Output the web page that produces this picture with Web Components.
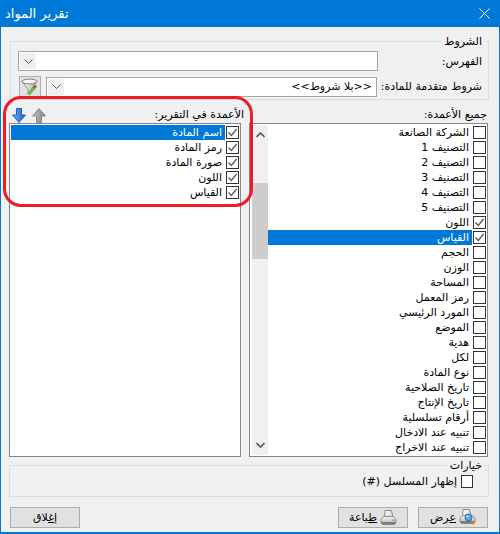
<!DOCTYPE html>
<html lang="ar">
<head>
<meta charset="utf-8">
<title>تقرير المواد</title>
<style>
  html, body { margin: 0; padding: 0; background: #f0f0f0; }
  body { font: 11px "DejaVu Sans", "Noto Sans", sans-serif; color: #000; }
</style>
</head>
<body>
<report-window caption="تقرير المواد"></report-window>

<script>
const CHECK = `<svg width="11" height="11" viewBox="0 0 11 11"><path d="M1.5 5.5 L4.3 8.5 L9.6 2" fill="none" stroke="#5a5a5a" stroke-width="1.3"/></svg>`;

const PRINTER_BODY = `
  <path d="M1 9.500 3.500 6.500h10L16 9.500v3.500l-1.500 1.500h-12L1 13z" fill="url(#body)" stroke="#858585" stroke-width=".9"/>
  <path d="M1.500 12h14v1.300l-1.200 1h-11.600l-1.200-1z" fill="#7d7d7d"/>`;
const PRINTER_DEFS = `
  <defs>
    <linearGradient id="body" x1="0" x2="0" y1="0" y2="1"><stop offset="0" stop-color="#f4f4f4"/><stop offset="1" stop-color="#b4b4b4"/></linearGradient>
    <linearGradient id="paper" x1="0" x2="1" y1="0" y2="1"><stop offset="0" stop-color="#fff"/><stop offset="1" stop-color="#bcd4e8"/></linearGradient>
  </defs>`;

const ICONS = {
  down: `<svg width="14" height="15" viewBox="0 0 14 15"><defs><linearGradient id="b" x1="0" x2="1"><stop offset="0" stop-color="#7db4ee"/><stop offset="1" stop-color="#1458b8"/></linearGradient></defs><path d="M4.5 .5h5v6.5h4L7 14.500.5 7h4z" fill="url(#b)" stroke="#1c5fb4"/></svg>`,
  up: `<svg width="14" height="15" viewBox="0 0 14 15"><defs><linearGradient id="g" x1="0" x2="1"><stop offset="0" stop-color="#c4c4c4"/><stop offset="1" stop-color="#808080"/></linearGradient></defs><path d="M4.5 14.500h5V8h4L7 .5.5 8h4z" fill="url(#g)" stroke="#8a8a8a"/></svg>`,
  funnel: `<svg width="18" height="18" viewBox="0 0 18 18">
    <defs><linearGradient id="f" x1="0" x2="1"><stop offset="0" stop-color="#fff"/><stop offset="1" stop-color="#a9a9a9"/></linearGradient></defs>
    <path d="M1 3.500 7 11.500V16l3-1.500v-3L16 3.500z" fill="url(#f)" stroke="#7a7a7a" stroke-width=".8"/>
    <ellipse cx="8.500" cy="3.500" rx="7.500" ry="2.400" fill="#f7f7f7" stroke="#6e6e6e" stroke-width=".9"/>
    <path d="M7.500 16.500 13.500 9.500" stroke="#5cc23f" stroke-width="3"/>
    <path d="M13 10 15 7.500" stroke="#e23a30" stroke-width="2.500"/>
  </svg>`,
  printer: `<svg width="17" height="16" viewBox="0 0 17 16">${PRINTER_DEFS}
    <path d="M5 .5h6.500l1.500 7H4.500z" fill="url(#paper)" stroke="#808080" stroke-width=".9"/>
    ${PRINTER_BODY}
    <rect x="12.500" y="9.500" width="2" height="1.200" fill="#3fb035"/>
  </svg>`,
  preview: `<svg width="17" height="17" viewBox="0 0 17 17">${PRINTER_DEFS}
    <path d="M4 .5h6.500l1.500 7H3.500z" fill="url(#paper)" stroke="#808080" stroke-width=".9"/>
    ${PRINTER_BODY}
    <circle cx="9.500" cy="8.500" r="3.500" fill="#5aa8e8" stroke="#2c6cb0"/>
    <circle cx="8.500" cy="7.500" r="1.100" fill="#cfe8fb"/>
    <path d="M12 11.500l3 3.500" stroke="#e2762a" stroke-width="2.200"/>
  </svg>`
};

// title bar + the three stacked sections of the dialog
class ReportWindow extends HTMLElement {
  constructor() {
    super();
    this.attachShadow({ mode: "open" });
  }

  connectedCallback() {
    const caption = this.getAttribute("caption") || "";
    this.shadowRoot.innerHTML = `
      <style>
        :host {
          display: flex;
          flex-direction: column;
          position: relative;
          box-sizing: border-box;
          width: 500px;
          height: 534px;
          border: 1px solid #0078d7;
          border-bottom-width: 2px;
          background: #f0f0f0;
          direction: rtl;
        }
        .titlebar {
          direction: ltr;
          display: flex;
          justify-content: space-between;
          align-items: center;
          height: 25px;
          padding: 0 9px 1px 4px;
          background: #0078d7;
          color: #fff;
          font-size: 13px;
        }
        .conditions { margin: 14px 10px 0 9px; }
        .columns {
          display: grid;
          grid-template-columns: 239px 232px;
          column-gap: 8px;
          margin: 0 11px 0 8px;
        }
        .options { margin: 8px 10px 0 8px; height: 32px; }
        .footer {
          display: flex;
          gap: 10px;
          margin: 10px 11px 0 9px;
        }
        .spacer { flex: 1; }
        .outline {
          position: absolute;
          left: 2px;
          top: 95px;
          width: 250px;
          height: 111px;
          box-sizing: border-box;
          border: 3px solid #ed1c24;
          border-radius: 18px;
          pointer-events: none;
        }
      </style>
      <div class="titlebar">
        <span dir="rtl">${caption}</span>
        <svg width="11" height="11" viewBox="0 0 11 11"><path d="M.5 .5l10 10M10.500 .5l-10 10" stroke="#fff" fill="none"/></svg>
      </div>
      <conditions-group class="conditions"></conditions-group>
      <div class="columns">
        <column-list heading="جميع الأعمدة:" scrolling selected="7" checked="6,7"
          items="الشركة الصانعة|التصنيف 1|التصنيف 2|التصنيف 3|التصنيف 4|التصنيف 5|اللون|القياس|الحجم|الوزن|المساحة|رمز المعمل|المورد الرئيسي|الموضع|هدية|لكل|نوع المادة|تاريخ الصلاحية|تاريخ الإنتاج|أرقام تسلسلية|تنبيه عند الادخال|تنبيه عند الاخراج"></column-list>
        <column-list heading="الأعمدة في التقرير:" arrows selected="0" checked="0,1,2,3,4"
          items="اسم المادة|رمز المادة|صورة المادة|اللون|القياس"></column-list>
      </div>
      <win-group class="options" label="خيارات">
        <options-row></options-row>
      </win-group>
      <div class="footer">
        <win-button icon="preview"><u>ع</u>رض</win-button>
        <win-button icon="printer"><u>ط</u>باعة</win-button>
        <span class="spacer"></span>
        <win-button>إ<u>غ</u>لاق</win-button>
      </div>
      <div class="outline"></div>
    `;
  }
}

class WinGroup extends HTMLElement {
  constructor() {
    super();
    this.attachShadow({ mode: "open" });
  }

  connectedCallback() {
    this.shadowRoot.innerHTML = `
      <style>
        :host {
          display: block;
          position: relative;
          box-sizing: border-box;
          border: 1px solid #dcdcdc;
        }
        .legend {
          position: absolute;
          top: -7px;
          right: 3px;
          padding: 0 3px;
          line-height: 14px;
          background: #f0f0f0;
        }
      </style>
      <div class="legend">${this.getAttribute("label") || ""}</div>
      <slot></slot>
    `;
  }
}

class WinCombo extends HTMLElement {
  constructor() {
    super();
    this.attachShadow({ mode: "open" });
  }

  connectedCallback() {
    this.shadowRoot.innerHTML = `
      <style>
        :host {
          display: flex;
          align-items: center;
          box-sizing: border-box;
          height: 20px;
          padding: 1px;
          border: 1px solid #a5a5a5;
          background: #fff;
        }
        .text { flex: 1; padding-right: 3px; }
        .drop {
          display: flex;
          align-items: center;
          justify-content: center;
          width: 16px;
          height: 100%;
          background: #f0f0f0;
        }
      </style>
      <span class="text"><slot></slot></span>
      <span class="drop">
        <svg width="9" height="5" viewBox="0 0 9 5"><path d="M.5 .5l4 4 4-4" fill="none" stroke="#555"/></svg>
      </span>
    `;
  }
}

class ConditionsGroup extends HTMLElement {
  constructor() {
    super();
    this.attachShadow({ mode: "open" });
  }

  connectedCallback() {
    this.shadowRoot.innerHTML = `
      <style>
        :host { display: block; }
        win-group {
          height: 59px;
          padding: 9px 6px 0 7px;
        }
        .grid {
          display: grid;
          grid-template-columns: 104px 1fr;
          row-gap: 5px;
          align-items: center;
        }
        .filter { display: flex; gap: 5px; align-items: center; margin-right: 1px; }
        .filter win-combo { flex: 1; }
        .filter button {
          display: flex;
          align-items: center;
          justify-content: center;
          width: 22px;
          height: 21px;
          margin: 0 0 0 1px;
          padding: 0;
          border: 1px solid #adadad;
          background: #e1e1e1;
        }
      </style>
      <win-group label="الشروط">
        <div class="grid">
          <label>الفهرس:</label>
          <win-combo></win-combo>
          <label>شروط متقدمة للمادة:</label>
          <div class="filter">
            <win-combo>&lt;&lt;بلا شروط&gt;&gt;</win-combo>
            <button>${ICONS.funnel}</button>
          </div>
        </div>
      </win-group>
    `;
  }
}

class ColumnList extends HTMLElement {
  constructor() {
    super();
    this.attachShadow({ mode: "open" });
  }

  connectedCallback() {
    const items = this.getAttribute("items").split("|");
    const checked = this.getAttribute("checked").split(",").map(Number);
    const selected = Number(this.getAttribute("selected"));
    const rows = items.map((text, i) => `
      <div class="row ${i === selected ? "selected" : ""}">
        <span class="box">${checked.includes(i) ? CHECK : ""}</span>
        <span class="text">${text}</span>
      </div>`).join("");
    const hasArrows = this.hasAttribute("arrows");
    const arrows = hasArrows ? `<span class="arrows">${ICONS.up}${ICONS.down}</span>` : "";
    const scrollbar = this.hasAttribute("scrolling")
      ? `<div class="scrollbar">
           <svg width="9" height="6" viewBox="0 0 9 6"><path d="M.5 5l4-4 4 4" fill="none" stroke="#555" stroke-width="1.600"/></svg>
           <div class="track"><div class="thumb"></div></div>
           <svg width="9" height="6" viewBox="0 0 9 6"><path d="M.5 1l4 4 4-4" fill="none" stroke="#555" stroke-width="1.600"/></svg>
         </div>` : "";

    this.shadowRoot.innerHTML = `
      <style>
        :host { display: block; }
        .head {
          display: flex;
          justify-content: space-between;
          align-items: center;
          height: 23px;
          box-sizing: border-box;
          padding: 5px 1px 0 0;
          margin-right: ${hasArrows ? "-4px" : "0"};
        }
        .arrows { display: flex; gap: 6px; margin-left: 3px; margin-top: 2px; }
        .list {
          display: flex;
          box-sizing: border-box;
          height: 334px;
          padding: 1px;
          border: 1px solid #828790;
          background: #fff;
        }
        .rows { flex: 1; }
        .row { display: flex; height: 15px; align-items: stretch; }
        .box {
          flex: none;
          display: flex;
          align-items: center;
          justify-content: center;
          box-sizing: border-box;
          width: 13px;
          height: 13px;
          margin: 1px 0 1px 1px;
          border: 1px solid #333;
          background: #fff;
        }
        .text {
          flex: 1;
          padding-right: 3px;
          line-height: 15px;
          white-space: nowrap;
        }
        .selected .text { background: #0078d7; color: #fff; }
        .scrollbar {
          flex: none;
          display: flex;
          flex-direction: column;
          align-items: center;
          justify-content: space-between;
          box-sizing: border-box;
          width: 16px;
          margin-left: 1px;
          padding: 7px 0;
          background: #f0f0f0;
        }
        .track { flex: 1; align-self: stretch; padding-top: 45px; }
        .thumb { height: 76px; background: #cdcdcd; }
      </style>
      <div class="head">
        <span>${this.getAttribute("heading")}</span>
        ${arrows}
      </div>
      <div class="list">
        <div class="rows">${rows}</div>
        ${scrollbar}
      </div>
    `;
  }
}

class OptionsRow extends HTMLElement {
  constructor() {
    super();
    this.attachShadow({ mode: "open" });
  }

  connectedCallback() {
    this.shadowRoot.innerHTML = `
      <style>
        :host {
          display: flex;
          align-items: center;
          gap: 4px;
          padding: 9px 15px 0 0;
        }
        .box {
          box-sizing: border-box;
          width: 12px;
          height: 13px;
          border: 1px solid #333;
          background: #fff;
        }
      </style>
      <span class="box"></span>
      <span>إظهار المسلسل (#)</span>
    `;
  }
}

class WinButton extends HTMLElement {
  constructor() {
    super();
    this.attachShadow({ mode: "open" });
  }

  connectedCallback() {
    const icon = ICONS[this.getAttribute("icon")] || "";
    this.shadowRoot.innerHTML = `
      <style>
        :host {
          display: flex;
          align-items: center;
          justify-content: center;
          gap: 3px;
          box-sizing: border-box;
          width: 70px;
          height: 21px;
          border: 1px solid #adadad;
          background: #e1e1e1;
        }
      </style>
      ${icon}
      <span><slot></slot></span>
    `;
  }
}

customElements.define("win-group", WinGroup);
customElements.define("win-combo", WinCombo);
customElements.define("win-button", WinButton);
customElements.define("conditions-group", ConditionsGroup);
customElements.define("column-list", ColumnList);
customElements.define("options-row", OptionsRow);
customElements.define("report-window", ReportWindow);
</script>
</body>
</html>
